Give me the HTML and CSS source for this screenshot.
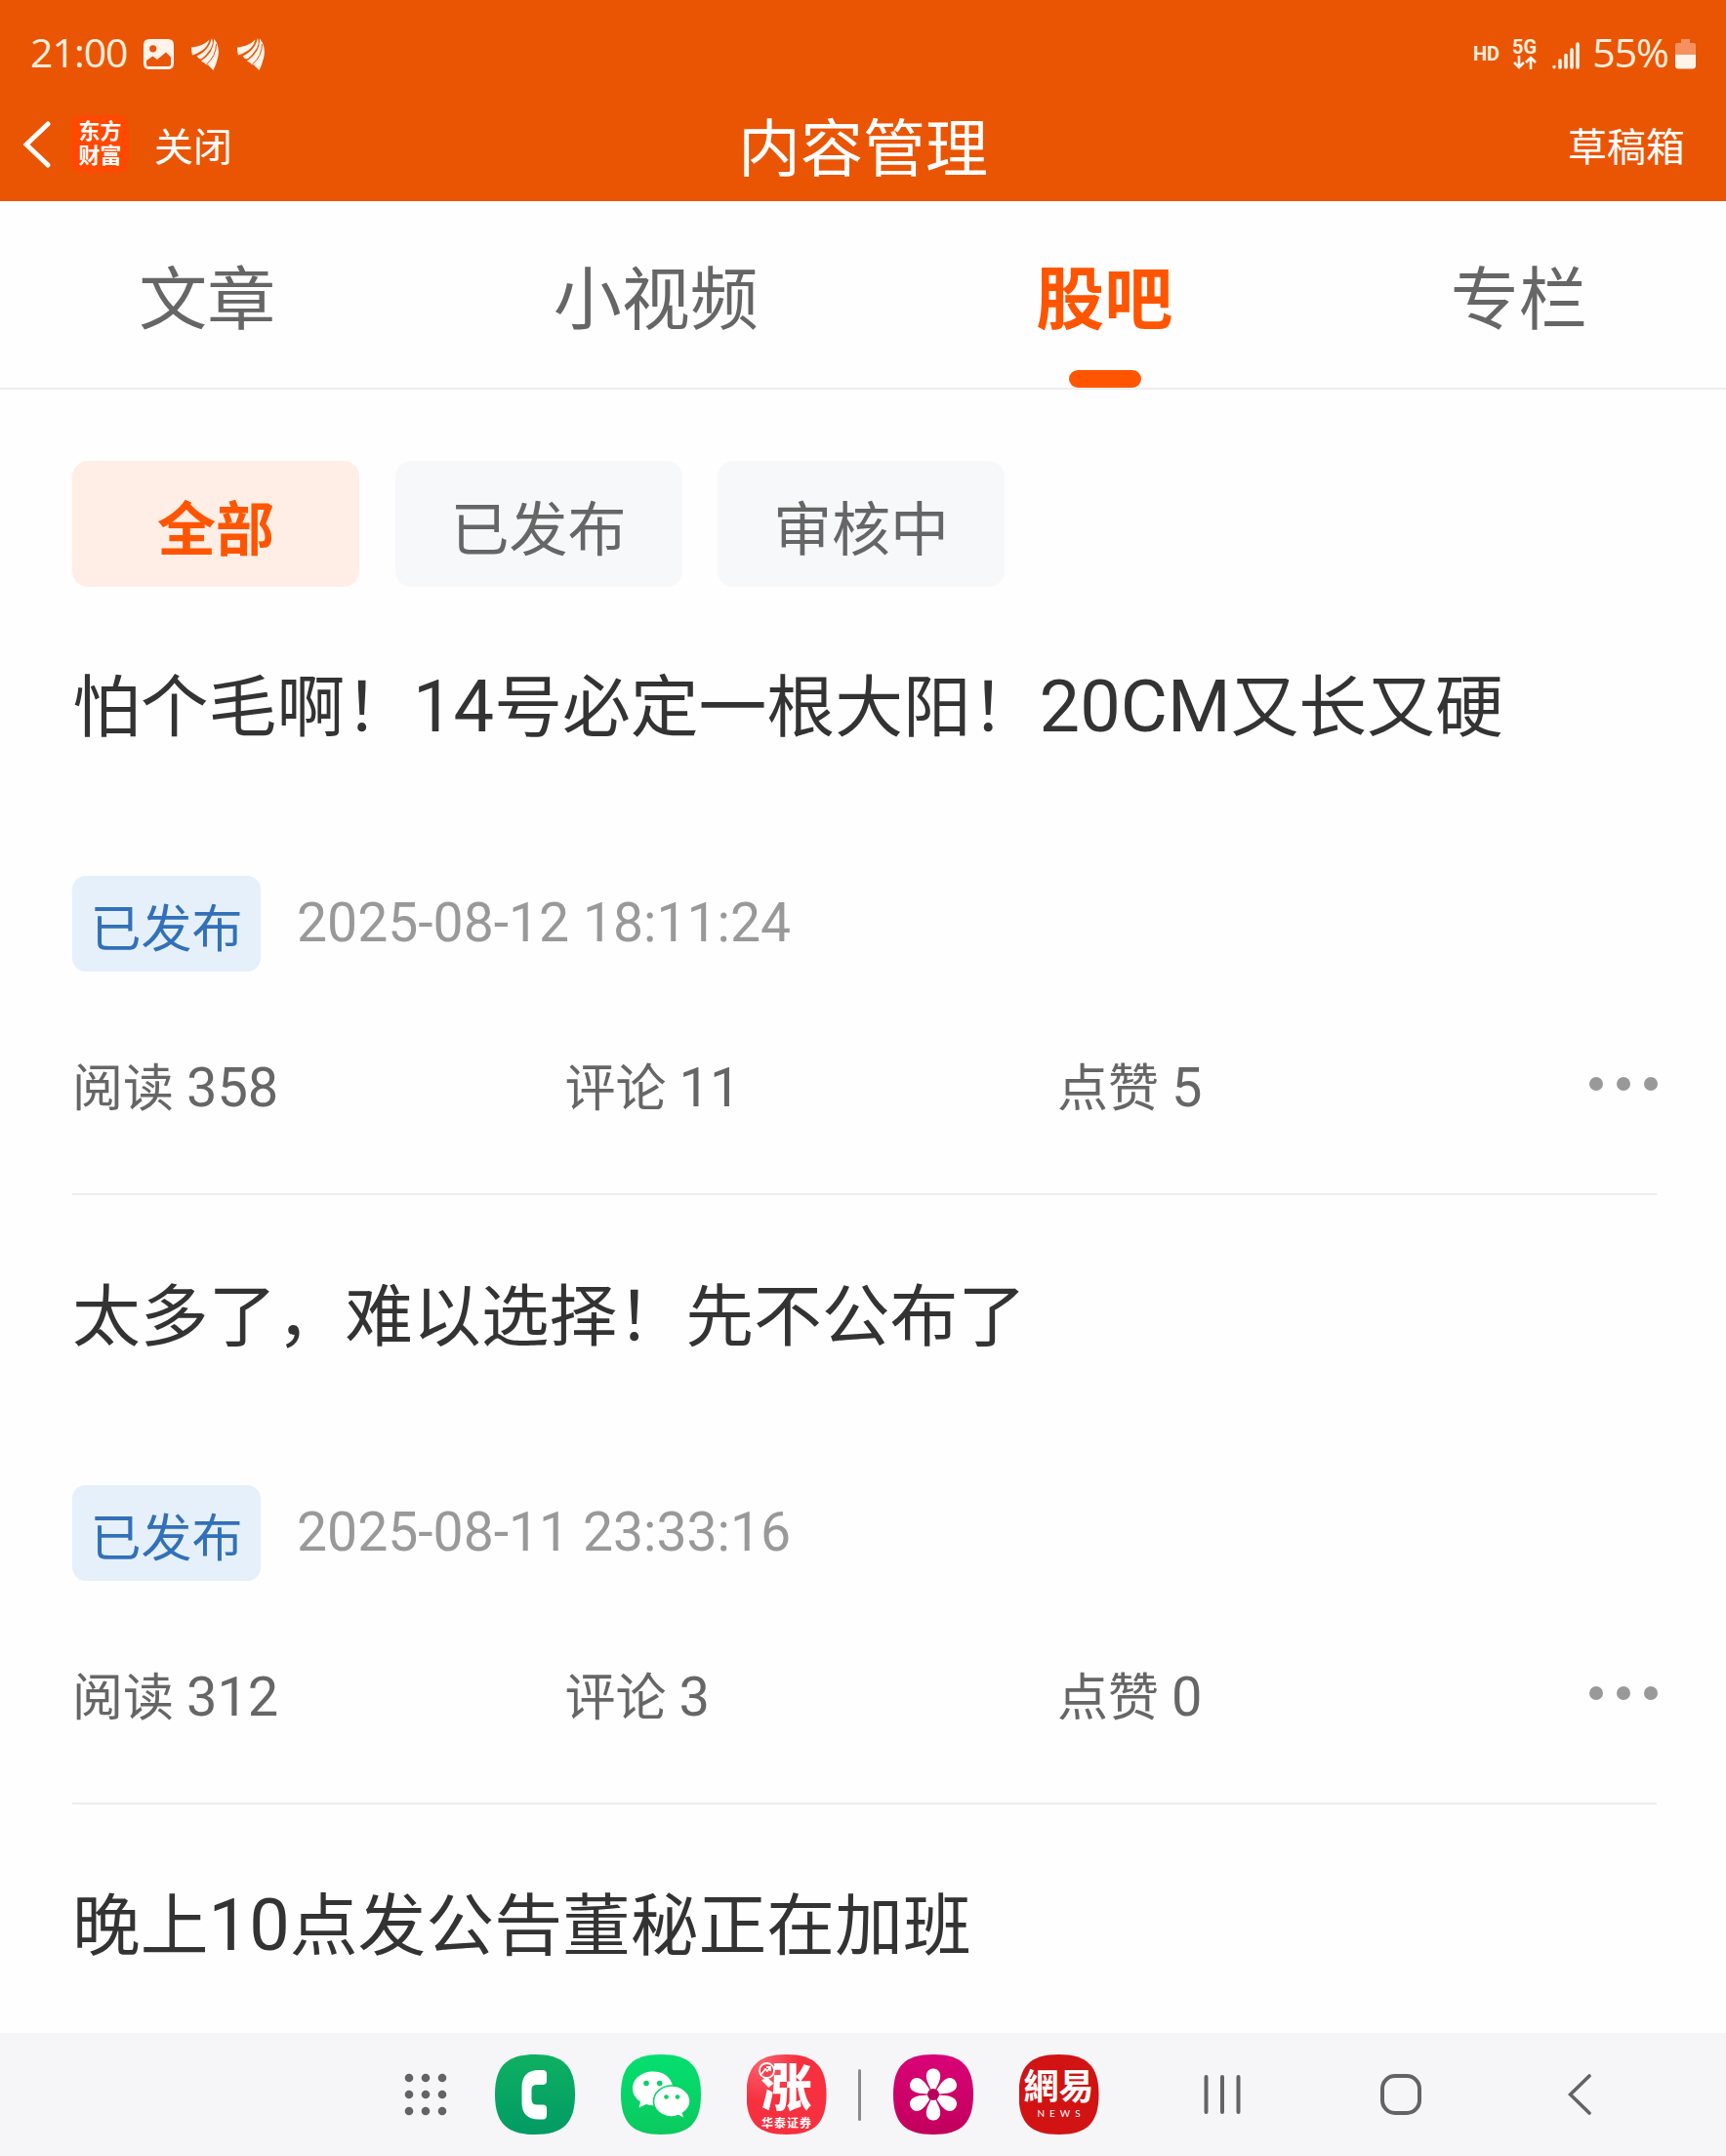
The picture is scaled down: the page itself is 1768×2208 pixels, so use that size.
FILE: index.html
```html
<!DOCTYPE html>
<html lang="zh-CN">
<head>
    <meta charset="UTF-8">
    <meta name="viewport" content="width=device-width, initial-scale=1">
    <title>内容管理</title>
    <link rel="stylesheet" href="styles.css">
</head>
<body>
    <header class="header">
        <div class="status">
            <span class="clock">21:00</span>
            <svg class="status-image" width="31" height="31" viewBox="0 0 31 31">
                <path fill="#fff3ea" fill-rule="evenodd" d="M6 0H25Q31 0 31 6V25Q31 31 25 31H6Q0 31 0 25V6Q0 0 6 0ZM9.700 6.200A3.600 3.600 0 1 0 9.700 13.400A3.600 3.600 0 1 0 9.700 6.200ZM3 22V25.500Q3 28 5.500 28H25.500Q28 28 28 25.500V18.500L23 13.500L14 21L9.500 17.500Z"/>
            </svg>
            <svg class="status-wing" width="29" height="33" viewBox="0 0 29 33">
                <g id="wing" fill="#fff3ea">
                    <path d="M0 9.500Q11 9 18.500 1.500Q17 9 10.500 13Q6 16 1 17.500Q0 14 0 9.500Z"/>
                    <path d="M21 0Q23.500 7 17.500 14Q14 19 10 21.500Q7 21 5.500 18.500Q18 13 21 0Z"/>
                    <path d="M23 0.500Q30 9 27 20.500Q25.500 27 22.500 33L17 27.500Q14 27.500 13.500 25.500L10 23.500Q24 14 23 0.500Z"/>
                    <path fill="none" stroke="#ea5504" stroke-width="1" d="M25.500 6Q25.500 18 15.500 27"/>
                </g>
            </svg>
            <svg class="status-wing" width="29" height="33" viewBox="0 0 29 33">
                <use href="#wing"/>
            </svg>
            <div class="status-right">
                <span class="hd">HD</span>
                <div class="network">
                    <span>5G</span>
                    <svg width="24" height="14" viewBox="0 0 24 14" fill="none" stroke="#fff3ea" stroke-width="2.600">
                        <path d="M6 0V12M1 7L6 12L11 7M18 14V2M13 7L18 2L23 7"/>
                    </svg>
                </div>
                <svg class="signal" width="28" height="28" viewBox="0 0 28 28" stroke="#fff3ea" stroke-width="3.600" stroke-linecap="round">
                    <path d="M2 25.500V25.600M8 19V26M14 13.500V26M20 8V26M26 2V26"/>
                </svg>
                <span class="percent">55%</span>
                <svg class="battery" width="21" height="31" viewBox="0 0 21 31">
                    <path fill="#f59160" d="M6 0H15V4H19Q21 4 21 6V16H0V6Q0 4 2 4H6Z"/>
                    <path fill="#fff3ea" d="M0 16H21V27Q21 30.500 17.500 30.500H3.500Q0 30.500 0 27Z"/>
                </svg>
            </div>
        </div>
        <div class="titlebar">
            <div class="titlebar-left">
                <svg width="28" height="48" viewBox="0 0 28 48" fill="none" stroke="#fff" stroke-width="5" stroke-linecap="round">
                    <path d="M25 3L3 24L25 45"/>
                </svg>
                <span class="logo">东方<br>财富</span>
                <span class="close">关闭</span>
            </div>
            <h1>内容管理</h1>
            <span class="drafts">草稿箱</span>
        </div>
    </header>

    <nav class="tabs">
        <span class="tab">文章</span>
        <span class="tab">小视频</span>
        <span class="tab active">股吧</span>
        <span class="tab">专栏</span>
    </nav>

    <main>
        <div class="filters">
            <span class="filter active">全部</span>
            <span class="filter">已发布</span>
            <span class="filter">审核中</span>
        </div>

        <article class="post">
            <h2>怕个毛啊！<b>14</b>号必定一根大阳！<b>20CM</b>又长又硬</h2>
            <div class="meta"><span class="badge">已发布</span><time>2025-08-12 18:11:24</time></div>
            <div class="stats">
                <span class="stat">阅读 <b>358</b></span>
                <span class="stat">评论 <b>11</b></span>
                <span class="stat">点赞 <b>5</b></span>
                <span class="more"><i></i><i></i><i></i></span>
            </div>
        </article>

        <article class="post">
            <h2>太多了，难以选择！先不公布了</h2>
            <div class="meta"><span class="badge">已发布</span><time>2025-08-11 23:33:16</time></div>
            <div class="stats">
                <span class="stat">阅读 <b>312</b></span>
                <span class="stat">评论 <b>3</b></span>
                <span class="stat">点赞 <b>0</b></span>
                <span class="more"><i></i><i></i><i></i></span>
            </div>
        </article>

        <article class="post">
            <h2>晚上<b>10</b>点发公告董秘正在加班</h2>
        </article>
    </main>

    <footer class="dock">
        <svg class="apps" width="44" height="44" viewBox="0 0 44 44" fill="#636365">
            <circle cx="5" cy="5" r="4.300"/><circle cx="22" cy="5" r="4.300"/><circle cx="39" cy="5" r="4.300"/>
            <circle cx="5" cy="22" r="4.300"/><circle cx="22" cy="22" r="4.300"/><circle cx="39" cy="22" r="4.300"/>
            <circle cx="5" cy="39" r="4.300"/><circle cx="22" cy="39" r="4.300"/><circle cx="39" cy="39" r="4.300"/>
        </svg>
        <svg class="app" viewBox="0 0 82 82">
            <defs>
                <linearGradient id="phone" x2="0" y2="1"><stop stop-color="#0eb062"/><stop offset="1" stop-color="#029b65"/></linearGradient>
            </defs>
            <path fill="url(#phone)" d="M41 0C70 0 82 12 82 41S70 82 41 82S0 70 0 41S12 0 41 0Z"/>
            <path fill="#fff" d="M45 16H49Q53 16 53 20V27Q53 31 49 31H43Q37.500 31 37.500 36V46Q37.500 51.500 43 51.500H49Q53 51.500 53 55.500V62Q53 66.500 49 66.500H45Q27.500 66.500 27.500 49V34Q27.500 16 45 16Z"/>
        </svg>
        <svg class="app" viewBox="0 0 82 82">
            <defs>
                <linearGradient id="chat" x2="0" y2="1"><stop stop-color="#05df70"/><stop offset="1" stop-color="#0bc95e"/></linearGradient>
            </defs>
            <path fill="url(#chat)" d="M41 0C70 0 82 12 82 41S70 82 41 82S0 70 0 41S12 0 41 0Z"/>
            <path fill="#fff" d="M33 17.500C21 17.500 12 25 12 35Q12 43 20 48.500L18.500 54.500L26 51Q34 53.500 38 51L53 32Q49 17.500 33 17.500Z"/>
            <path fill="#fff" stroke="#08d367" stroke-width="1.500" d="M52 32C42 32 33.500 39 33.500 48S42 64 52 64Q56 64 59 62.500L65 66L63.500 60Q71 55 71 48C71 39 62 32 52 32Z"/>
            <g fill="#08d165"><circle cx="26" cy="29.500" r="2.800"/><circle cx="39.700" cy="29.500" r="2.800"/><circle cx="46.500" cy="43.500" r="2.300"/><circle cx="58" cy="43.500" r="2.300"/></g>
        </svg>
        <div class="app app-zhang">
            <svg class="zhang-mark" width="17" height="17" viewBox="0 0 17 17" stroke="#fff" stroke-width="1.800">
                <circle cx="8.500" cy="8.500" r="7.500" fill="#f7404f"/><path fill="none" d="M3 12L7 7L9 9L12 5M8 5H12V9"/>
            </svg>
            <span class="zhang-big">涨</span><span class="zhang-small">华泰证券</span>
        </div>
        <span class="dock-line"></span>
        <svg class="app" viewBox="0 0 82 82">
            <defs>
                <linearGradient id="gallery" x2="0" y2="1"><stop stop-color="#d90377"/><stop offset="1" stop-color="#c2005c"/></linearGradient>
            </defs>
            <path fill="url(#gallery)" d="M41 0C70 0 82 12 82 41S70 82 41 82S0 70 0 41S12 0 41 0Z"/>
            <g fill="#fff">
                <path id="petal" d="M41 41L35 28C32 20 35 14.500 41 14.500S50 20 47 28Z"/>
                <use href="#petal" transform="rotate(60 41 41)"/><use href="#petal" transform="rotate(120 41 41)"/><use href="#petal" transform="rotate(180 41 41)"/><use href="#petal" transform="rotate(240 41 41)"/><use href="#petal" transform="rotate(300 41 41)"/>
            </g>
            <circle cx="41" cy="41" r="6" fill="#b8005c"/>
        </svg>
        <div class="app app-news"><span class="news-big">網易</span><span class="news-small">NEWS</span></div>
        <svg class="key-recents" width="38" height="42" viewBox="0 0 38 42" stroke="#636365" stroke-width="4" stroke-linecap="round">
            <path d="M2.500 3V39M19 3V39M35.500 3V39"/>
        </svg>
        <svg class="key-home" width="42" height="42" viewBox="0 0 42 42" fill="none" stroke="#636365" stroke-width="4">
            <rect x="2" y="2" width="38" height="38" rx="13"/>
        </svg>
        <svg class="key-back" width="24" height="42" viewBox="0 0 24 42" fill="none" stroke="#636365" stroke-width="3.600" stroke-linecap="round">
            <path d="M22 2L2.500 21L22 40"/>
        </svg>
    </footer>
</body>
</html>
```

FILE: styles.css
```css
html, body {
    margin: 0;
    padding: 0;
}
body {
    display: flex;
    flex-direction: column;
    height: 2208px;
    overflow: hidden;
    background: #fefefe;
    color: #333;
    font-family: Roboto, "Noto Sans CJK SC", sans-serif;
}
svg {
    display: block;
    flex: none;
}
b {
    font-weight: 400;
}
.header {
    height: 206px;
    flex: none;
    background: #ea5504;
    color: #fff;
}
.status {
    display: flex;
    align-items: center;
    height: 110px;
    padding: 0 31px 0 31px;
    color: #ffeedd;
}
.clock,
.percent {
    padding-bottom: 4px;
    font-family: "Open Sans", sans-serif;
    font-size: 41px;
    line-height: 50px;
    letter-spacing: -1px;
}
.clock {
    width: 116px;
}
.status-wing {
    margin-left: 18px;
}
.status-right {
    display: flex;
    align-items: center;
    margin-left: auto;
}
.hd {
    font-size: 20px;
    font-weight: 700;
}
.network {
    display: flex;
    flex-direction: column;
    align-items: center;
    margin: 0 16px 0 13px;
    font-size: 20px;
    font-weight: 700;
    line-height: 18px;
}
.signal {
    margin-top: 4px;
}
.percent {
    margin: 0 7px 0 13px;
}
.titlebar {
    display: grid;
    grid-template-columns: 1fr auto 1fr;
    align-items: center;
    height: 75px;
    padding: 0 42px;
    font-size: 40px;
}
.titlebar-left {
    display: flex;
    align-items: center;
    margin-left: -18px;
}
.titlebar h1 {
    margin: 13px 0 0;
    font-size: 64px;
    font-weight: 400;
    line-height: 62px;
}
.logo {
    width: 59px;
    height: 50px;
    margin: 0 26px 0 21px;
    padding: 4px 0 5px;
    border-radius: 12px;
    background: #ff4800;
    font-size: 22px;
    font-weight: 700;
    line-height: 25px;
    text-align: center;
}
.drafts {
    justify-self: end;
}
.tabs {
    display: flex;
    justify-content: space-around;
    height: 191px;
    flex: none;
    border-bottom: 2px solid #ededed;
}
.tab {
    position: relative;
    color: #666;
    font-size: 70px;
    line-height: 204px;
}
.tab.active,
.filter.active {
    color: #ff5500;
    font-weight: 700;
}
.tab.active::after {
    content: "";
    position: absolute;
    left: 50%;
    bottom: 0;
    width: 74px;
    height: 18px;
    margin-left: -36px;
    border-radius: 9px;
    background: #ff5500;
}
main {
    flex: 1;
    overflow: hidden;
    padding: 73px 71px 0 74px;
}
.filters {
    display: flex;
    gap: 36.500px;
    height: 128px;
}
.filter {
    width: 294px;
    height: 129px;
    border-radius: 16px;
    background: #f7f8fa;
    color: #666;
    font-size: 60px;
    line-height: 144px;
    text-align: center;
}
.filter.active {
    background: #ffeee6;
}
.post {
    height: 622px;
    border-bottom: 2px solid #ededed;
}
.post h2 {
    height: 297px;
    margin: 0;
    font-size: 69.800px;
    font-weight: 400;
    line-height: 250px;
    white-space: nowrap;
}
.post h2 b {
    font-size: 74px;
    line-height: 1;
}
.meta {
    display: flex;
    height: 98px;
}
.badge {
    width: 193px;
    margin-right: 37px;
    border-radius: 14px;
    background: #e5f0fa;
    color: #3270b9;
    font-size: 52px;
    line-height: 111px;
    text-align: center;
}
time {
    color: #999;
    font-size: 55.300px;
    line-height: 98px;
}
.stats {
    display: flex;
    align-items: center;
    height: 120px;
    margin-top: 55px;
    color: #666;
}
.stat {
    width: 504.500px;
    font-size: 52px;
}
.stat b {
    font-size: 56px;
}
.more {
    display: flex;
    gap: 14px;
    margin-left: auto;
    margin-right: -1px;
}
.more i {
    width: 14px;
    height: 14px;
    border-radius: 50%;
    background: #999;
}
.dock {
    display: flex;
    align-items: center;
    height: 126px;
    flex: none;
    padding-left: 414px;
    background: #f6f6f8;
}
.app {
    width: 82px;
    height: 82px;
    margin-left: 47px;
}
.apps + .app {
    margin-left: 48.500px;
}
.app-zhang,
.app-news {
    display: flex;
    flex-direction: column;
    align-items: center;
    position: relative;
    clip-path: path("M41 0C70 0 82 12 82 41S70 82 41 82S0 70 0 41S12 0 41 0Z");
    color: #fff;
}
.app-zhang {
    background: radial-gradient(circle at 15px 10px, #f9606e, #f7303f 38px);
}
.zhang-mark {
    position: absolute;
    left: 12px;
    top: 8px;
}
.zhang-big {
    margin-top: 9px;
    font-size: 52px;
    font-weight: 900;
    line-height: 54px;
}
.zhang-small {
    margin-right: -1px;
    font-size: 12px;
    font-weight: 700;
    line-height: 17px;
    letter-spacing: 1px;
}
.dock-line {
    width: 3px;
    height: 53px;
    margin-left: 32px;
    border-radius: 2px;
    background: #8b8b8d;
}
.dock-line + .app {
    margin-left: 33px;
}
.app-news {
    background: #d11314;
}
.news-big {
    margin-top: 15px;
    font-size: 36px;
    font-weight: 700;
    line-height: 38px;
}
.news-small {
    margin-right: -5px;
    font-family: Lato, sans-serif;
    font-size: 10px;
    line-height: 15px;
    letter-spacing: 5px;
}
.key-recents {
    margin-left: 107px;
}
.key-home {
    margin-left: 143px;
}
.key-back {
    margin-left: 150px;
}
```
